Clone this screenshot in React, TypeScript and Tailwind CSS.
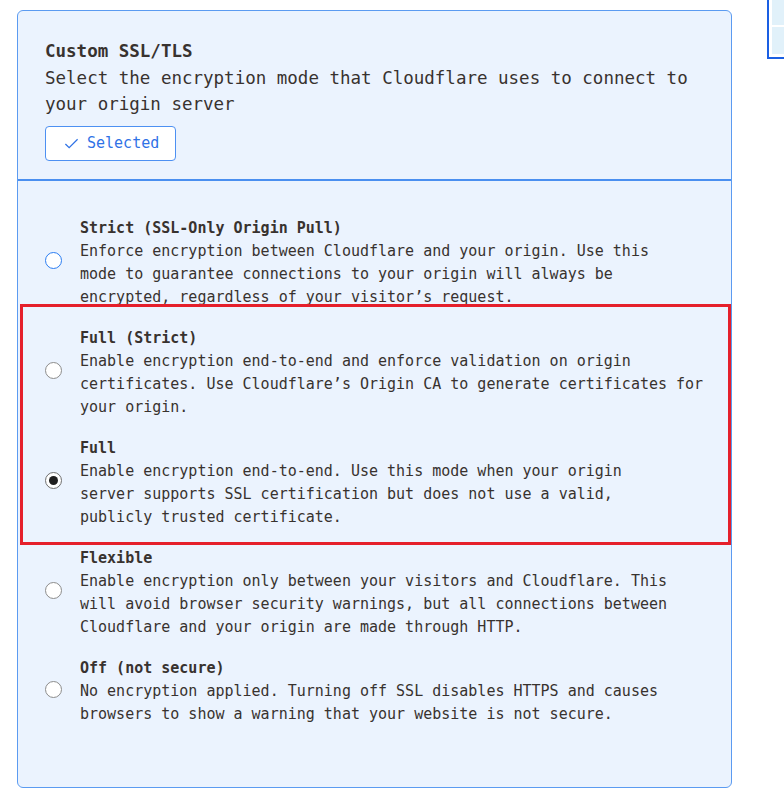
import React from "react";

type Mode = {
  title: string;
  lines: string[];
  state?: "focus" | "checked";
};

const modes: Mode[] = [
  {
    title: "Strict (SSL-Only Origin Pull)",
    lines: [
      "Enforce encryption between Cloudflare and your origin. Use this",
      "mode to guarantee connections to your origin will always be",
      "encrypted, regardless of your visitor’s request.",
    ],
    state: "focus",
  },
  {
    title: "Full (Strict)",
    lines: [
      "Enable encryption end-to-end and enforce validation on origin",
      "certificates. Use Cloudflare’s Origin CA to generate certificates for",
      "your origin.",
    ],
  },
  {
    title: "Full",
    lines: [
      "Enable encryption end-to-end. Use this mode when your origin",
      "server supports SSL certification but does not use a valid,",
      "publicly trusted certificate.",
    ],
    state: "checked",
  },
  {
    title: "Flexible",
    lines: [
      "Enable encryption only between your visitors and Cloudflare. This",
      "will avoid browser security warnings, but all connections between",
      "Cloudflare and your origin are made through HTTP.",
    ],
  },
  {
    title: "Off (not secure)",
    lines: [
      "No encryption applied. Turning off SSL disables HTTPS and causes",
      "browsers to show a warning that your website is not secure.",
    ],
  },
];

function Radio({ state }: { state?: Mode["state"] }) {
  if (state === "checked") {
    return (
      <span className="mb-[5px] flex h-[17px] w-[17px] shrink-0 items-center justify-center rounded-full border border-[#6f6f6f] bg-white">
        <span className="h-[9px] w-[9px] rounded-full bg-[#1f1f1f]" />
      </span>
    );
  }
  if (state === "focus") {
    return <span className="mb-[5px] h-[17px] w-[17px] shrink-0 rounded-full border-[1.5px] border-[#2b7df2] bg-white" />;
  }
  return <span className="mb-[5px] h-[17px] w-[17px] shrink-0 rounded-full border border-[#8c8c8c] bg-white" />;
}

export default function App() {
  return (
    <div
      className="relative flex min-h-[798px] overflow-hidden bg-white text-[#38322f]"
      style={{ fontFamily: '"DejaVu Sans Mono", "Liberation Mono", monospace' }}
    >
      <div className="ml-[17px] mt-[10px] flex h-[778px] w-[715px] flex-col rounded-md border border-[#5b9bf1] bg-[#ebf3fe]">
        <div className="border-b-2 border-[#4a8ff0] px-[27px] pb-[18px] pt-[27px]">
          <h2 className="text-[17.5px] font-bold leading-[27px]">Custom SSL/TLS</h2>
          <p className="whitespace-nowrap text-[17.5px] leading-[26px]">
            Select the encryption mode that Cloudflare uses to connect to
            <br />
            your origin server
          </p>
          <button className="mt-[9px] flex h-[35px] w-[131px] items-center gap-[8px] rounded-[4px] border border-[#4d90f2] bg-white pl-[18px] text-[15px] text-[#2f72e6]">
            <svg width="15" height="15" viewBox="0 0 16 16" fill="none" stroke="#2f72e6" strokeWidth="1.3">
              <path d="M1.5 8.5 L5.5 12.5 L14.5 3.5" />
            </svg>
            Selected
          </button>
        </div>

        <div className="flex flex-col gap-[18px] px-[27px] pt-[36px]">
          {modes.map((m) => (
            <div key={m.title} className="flex items-center gap-[18px]">
              <Radio state={m.state} />
              <div className="whitespace-nowrap text-[15px] leading-[23px]">
                <div className="font-bold">{m.title}</div>
                {m.lines.map((l) => (
                  <div key={l}>{l}</div>
                ))}
              </div>
            </div>
          ))}
        </div>
      </div>

      {/* neighbouring element, cut off at the window edge */}
      <div className="absolute left-[767px] top-[-12px] flex h-[71px] w-[40px] flex-col gap-[2px] border-2 border-[#1a5fe3] bg-white p-[3px]">
        <div className="h-[34px] bg-[#e1f1fa]" />
        <div className="h-[28px] bg-[#e1f1fa]" />
      </div>

      {/* highlight annotation */}
      <div className="pointer-events-none absolute left-[20px] top-[304px] h-[241px] w-[711px] border-[3px] border-[#e51f2b]" />
    </div>
  );
}
